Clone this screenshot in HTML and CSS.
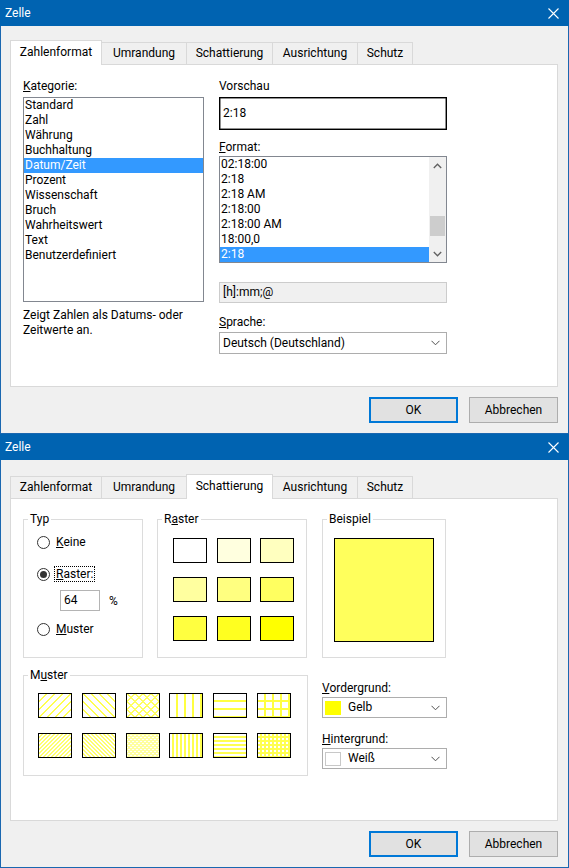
FILE: index.html
```html
<!DOCTYPE html>
<html lang="de">
<head>
<meta charset="utf-8">
<title>Zelle</title>
<link rel="stylesheet" href="styles.css">
</head>
<body>
<div class="window">
  <div class="titlebar">
    <span class="title">Zelle</span>
    <svg class="close" width="11" height="11" viewBox="0 0 11 11"><path d="M0.5,0.5 L10.5,10.5 M10.5,0.5 L0.5,10.5" stroke="#ffffff" stroke-width="1.1"/></svg>
  </div>
  <div class="client">
    <div class="tabs">
      <div class="tab active t-zahl">Zahlenformat</div>
      <div class="tab t-umr">Umrandung</div>
      <div class="tab t-sch">Schattierung</div>
      <div class="tab t-aus">Ausrichtung</div>
      <div class="tab t-schutz">Schutz</div>
    </div>
    <div class="panel p1">
      <div class="col-left">
        <div class="lbl"><u>K</u>ategorie:</div>
        <div class="listbox cat">
          <div class="item">Standard</div>
          <div class="item">Zahl</div>
          <div class="item">Währung</div>
          <div class="item">Buchhaltung</div>
          <div class="item sel">Datum/Zeit</div>
          <div class="item">Prozent</div>
          <div class="item">Wissenschaft</div>
          <div class="item">Bruch</div>
          <div class="item">Wahrheitswert</div>
          <div class="item">Text</div>
          <div class="item">Benutzerdefiniert</div>
        </div>
        <div class="desc">Zeigt Zahlen als Datums- oder<br>Zeitwerte an.</div>
      </div>
      <div class="col-right">
        <div class="lbl">Vorschau</div>
        <div class="preview">2:18</div>
        <div class="lbl fmt-lbl"><u>F</u>ormat:</div>
        <div class="listbox fmt">
          <div class="items">
            <div class="item">02:18:00</div>
            <div class="item">2:18</div>
            <div class="item">2:18 AM</div>
            <div class="item">2:18:00</div>
            <div class="item">2:18:00 AM</div>
            <div class="item">18:00,0</div>
            <div class="item sel">2:18</div>
          </div>
          <div class="vscroll">
            <div class="sb-btn"><svg width="9" height="6" viewBox="0 0 9 6"><path d="M0.8,5 L4.5,1.2 L8.2,5" fill="none" stroke="#606060" stroke-width="1.3"/></svg></div>
            <div class="sb-track"><div class="sb-thumb"></div></div>
            <div class="sb-btn"><svg width="9" height="6" viewBox="0 0 9 6"><path d="M0.8,1 L4.5,4.8 L8.2,1" fill="none" stroke="#606060" stroke-width="1.3"/></svg></div>
          </div>
        </div>
        <div class="codebox">[h]:mm;@</div>
        <div class="lbl lang-lbl"><u>S</u>prache:</div>
        <div class="combo lang">
          <span class="combo-text">Deutsch (Deutschland)</span>
          <svg class="chev" width="9" height="6" viewBox="0 0 9 6"><path d="M0.5,0.8 L4.5,4.8 L8.5,0.8" fill="none" stroke="#505050" stroke-width="1"/></svg>
        </div>
      </div>
    </div>
    <div class="buttons">
      <div class="btn default">OK</div>
      <div class="btn">Abbrechen</div>
    </div>
  </div>
</div>

<div class="window">
  <div class="titlebar">
    <span class="title">Zelle</span>
    <svg class="close" width="11" height="11" viewBox="0 0 11 11"><path d="M0.5,0.5 L10.5,10.5 M10.5,0.5 L0.5,10.5" stroke="#ffffff" stroke-width="1.1"/></svg>
  </div>
  <div class="client">
    <div class="tabs">
      <div class="tab t-zahl">Zahlenformat</div>
      <div class="tab t-umr">Umrandung</div>
      <div class="tab active t-sch">Schattierung</div>
      <div class="tab t-aus">Ausrichtung</div>
      <div class="tab t-schutz">Schutz</div>
    </div>
    <div class="panel p2">
      <div class="row-top">
        <fieldset class="group typ">
          <legend>Typ</legend>
          <div class="radio-row r1"><span class="radio"></span><span class="rlabel"><u>K</u>eine</span></div>
          <div class="radio-row r2"><span class="radio checked"></span><span class="rlabel focus"><u>R</u>aster:</span></div>
          <div class="pct-row"><span class="spin">64</span><span class="pct">%</span></div>
          <div class="radio-row r3"><span class="radio"></span><span class="rlabel"><u>M</u>uster</span></div>
        </fieldset>
        <fieldset class="group raster">
          <legend>R<u>a</u>ster</legend>
          <div class="swatches">
            <div class="sw s0"></div><div class="sw s1"></div><div class="sw s2"></div>
            <div class="sw s3"></div><div class="sw s4"></div><div class="sw s5"></div>
            <div class="sw s6"></div><div class="sw s7"></div><div class="sw s8"></div>
          </div>
        </fieldset>
        <fieldset class="group beispiel">
          <legend>Beispiel</legend>
          <div class="sample"></div>
        </fieldset>
      </div>
      <div class="row-bottom">
        <fieldset class="group muster">
          <legend>M<u>u</u>ster</legend>
          <div class="patterns">
            <div class="pat up8"></div>
            <div class="pat dn8"></div>
            <div class="pat x8"></div>
            <div class="pat v8"></div>
            <div class="pat h8"></div>
            <div class="pat g8"></div>
            <div class="pat up4"></div>
            <div class="pat dn4"></div>
            <div class="pat x4"></div>
            <div class="pat v4"></div>
            <div class="pat h4"></div>
            <div class="pat g4"></div>
          </div>
        </fieldset>
        <div class="colors">
          <div class="lbl vg-lbl"><u>V</u>ordergrund:</div>
          <div class="combo color">
            <span class="chip yellow"></span><span class="combo-text">Gelb</span>
            <svg class="chev" width="9" height="6" viewBox="0 0 9 6"><path d="M0.5,0.8 L4.5,4.8 L8.5,0.8" fill="none" stroke="#505050" stroke-width="1"/></svg>
          </div>
          <div class="lbl hg-lbl"><u>H</u>intergrund:</div>
          <div class="combo color">
            <span class="chip white"></span><span class="combo-text">Weiß</span>
            <svg class="chev" width="9" height="6" viewBox="0 0 9 6"><path d="M0.5,0.8 L4.5,4.8 L8.5,0.8" fill="none" stroke="#505050" stroke-width="1"/></svg>
          </div>
        </div>
      </div>
    </div>
    <div class="buttons">
      <div class="btn default">OK</div>
      <div class="btn">Abbrechen</div>
    </div>
  </div>
</div>
</body>
</html>
```

FILE: styles.css
```css
* { box-sizing: border-box; }
html, body { margin: 0; padding: 0; }
body {
  width: 569px;
  height: 868px;
  overflow: hidden;
  background: #f0f0f0;
  font-family: Roboto, "Noto Sans", "DejaVu Sans", sans-serif;
  font-size: 12px;
  color: #000;
}

.window {
  width: 569px;
  height: 434px;
  display: flex;
  flex-direction: column;
  background: #f0f0f0;
  border: 1px solid #1a67b0;
  border-top: 0;
}
.titlebar {
  height: 26px;
  flex: none;
  margin: 0 -1px;
  padding: 0 10px 0 5px;
  background: #0063b1;
  color: #fff;
  display: flex;
  align-items: center;
  justify-content: space-between;
}
.title { font-size: 12px; line-height: 15px; }
.close { display: block; }

.client {
  flex: 1;
  padding: 14px 10px 0 9px;
  display: flex;
  flex-direction: column;
}

/* tabs */
.tabs {
  height: 25px;
  margin-bottom: -1px;
  display: flex;
  align-items: flex-end;
}
.tab {
  height: 22px;
  margin-bottom: 1px;
  border: 1px solid #d9d9d9;
  border-bottom: 0;
  border-left-width: 0;
  background: #f0f0f0;
  line-height: 21px;
  text-align: center;
  white-space: nowrap;
}
.tab:first-child { border-left-width: 1px; }
.tab.active {
  position: relative;
  z-index: 1;
  height: 25px;
  margin-bottom: 0;
  background: #fff;
  border-left-width: 1px;
  line-height: 22px;
}
.t-zahl { width: 92px; }
.t-umr { width: 85px; }
.t-sch { width: 86px; }
.t-aus { width: 85px; }
.t-schutz { width: 55px; }
.tabs .tab.t-sch.active { margin-left: -1px; width: 87px; }

.panel {
  height: 323px;
  flex: none;
  background: #fff;
  border: 1px solid #d9d9d9;
}

.lbl { height: 15px; line-height: 15px; white-space: nowrap; }

/* page 1 */
.p1 {
  display: flex;
  padding: 14px 0 0 12px;
}
.col-left { width: 180px; }
.col-right { width: 228px; margin-left: 16px; }
.listbox {
  border: 1px solid #828790;
  background: #fff;
}
.listbox.cat {
  margin-top: 3px;
  height: 205px;
  width: 181px;
}
.item {
  height: 15px;
  line-height: 15px;
  padding-left: 1px;
  white-space: nowrap;
}
.item.sel { background: #3399ff; color: #fff; }
.desc { margin-top: 6px; line-height: 15px; }

.preview {
  margin-top: 3px;
  height: 33px;
  border: 1px solid #000;
  box-shadow: inset 0 0 0 0.5px #222;
  padding-left: 3px;
  line-height: 31px;
}
.fmt-lbl { margin-top: 10px; }
.listbox.fmt {
  margin-top: 1px;
  height: 107px;
  display: flex;
}
.items { flex: 1; }
.vscroll {
  width: 17px;
  display: flex;
  flex-direction: column;
  background: #f0f0f0;
}
.sb-btn {
  height: 17px;
  display: flex;
  align-items: center;
  justify-content: center;
}
.sb-btn svg { display: block; }
.sb-track { flex: 1; padding: 0 1px; }
.sb-thumb {
  margin-top: 42px;
  height: 20px;
  background: #cdcdcd;
}
.codebox {
  margin-top: 19px;
  height: 21px;
  border: 1px solid #cccccc;
  background: #f0f0f0;
  padding-left: 3px;
  line-height: 19px;
}
.lang-lbl { margin-top: 12px; }
.combo {
  margin-top: 2px;
  height: 22px;
  border: 1px solid #adadad;
  background: #fff;
  display: flex;
  align-items: center;
  padding: 0 6px 0 3px;
}
.combo-text { flex: 1; white-space: nowrap; line-height: 15px; }
.chev { display: block; flex: none; }

/* buttons */
.buttons {
  margin-top: 10px;
  display: flex;
  justify-content: flex-end;
  gap: 11px;
}
.btn {
  width: 89px;
  height: 26px;
  border: 1px solid #adadad;
  background: #e1e1e1;
  text-align: center;
  line-height: 24px;
}
.btn.default {
  border: 2px solid #0078d7;
  line-height: 22px;
}

/* page 2 */
.p2 { padding: 13px 0 0 12px; }
.row-top { display: flex; height: 146px; }
.row-bottom { display: flex; margin-top: 10px; }
.group {
  margin: 0;
  padding: 0;
  min-width: 0;
  border: 1px solid #dcdcdc;
}
.group legend {
  margin-left: 4px;
  padding: 0 2px;
  line-height: 15px;
  font-size: 12px;
}
.typ { width: 120px; }
.raster { width: 150px; margin-left: 14px; padding-top: 11px; }
.beispiel { width: 124px; margin-left: 15px; padding-top: 11px; }

.radio-row { display: flex; align-items: center; height: 16px; margin-left: 13px; }
.radio-row.r1 { margin-top: 7px; }
.radio-row.r2 { margin-top: 16px; }
.radio-row.r3 { margin-top: 10px; }
.radio {
  width: 13px;
  height: 13px;
  border: 1px solid #333;
  border-radius: 50%;
  background: #fff;
  flex: none;
  display: flex;
  align-items: center;
  justify-content: center;
}
.radio.checked::after {
  content: "";
  width: 7px;
  height: 7px;
  border-radius: 50%;
  background: #333;
}
.rlabel { margin-left: 5px; line-height: 14px; padding: 0 1px; }
.rlabel.focus { outline: 1px dotted #000; outline-offset: 0; }
.pct-row { display: flex; align-items: center; margin-top: 8px; margin-left: 36px; }
.spin {
  width: 40px;
  height: 21px;
  border: 1px solid #b4b4b4;
  background: #fff;
  padding-left: 3px;
  line-height: 19px;
}
.pct { margin-left: 9px; }

.swatches {
  display: grid;
  grid-template-columns: repeat(3, 34px);
  grid-auto-rows: 25px;
  column-gap: 9.5px;
  row-gap: 14px;
  margin-left: 15px;
}
.sw { border: 1px solid #000; }
.s0 { background: #ffffff; }
.s1 { background: #ffffdf; }
.s2 { background: #ffffbf; }
.s3 { background: #ffff9f; }
.s4 { background: #ffff80; }
.s5 { background: #ffff60; }
.s6 { background: #ffff40; }
.s7 { background: #ffff20; }
.s8 { background: #ffff00; }
.sample {
  margin-left: 11px;
  width: 100px;
  height: 104px;
  border: 1px solid #000;
  background: #ffff5c;
}

.muster { width: 285px; height: 108px; padding-top: 10px; }
.patterns {
  display: grid;
  grid-template-columns: repeat(6, 34px);
  grid-auto-rows: 25px;
  column-gap: 9.8px;
  row-gap: 15px;
  margin-left: 14px;
}
.pat { border: 1px solid #000; background-color: #fff; }
.up8 { background-image: repeating-linear-gradient(-45deg, #fff 0 4.4px, #ffff50 4.4px 5.657px); }
.dn8 { background-image: repeating-linear-gradient(45deg, #fff 0 4.4px, #ffff50 4.4px 5.657px); }
.x8 {
  background-image:
    repeating-linear-gradient(-45deg, transparent 0 4.66px, #ffff60 4.66px 5.657px),
    repeating-linear-gradient(45deg, #fff 0 4.66px, #ffff60 4.66px 5.657px);
}
.v8 { background-image: repeating-linear-gradient(90deg, #fff 0 6px, #ffff40 6px 8px); }
.h8 { background-image: repeating-linear-gradient(180deg, #fff 0 6px, #ffff40 6px 8px); }
.g8 {
  background-image:
    repeating-linear-gradient(90deg, rgba(255,255,255,0) 0 6px, #ffff40 6px 8px),
    repeating-linear-gradient(180deg, #fff 0 6px, #ffff40 6px 8px);
}
.up4 { background-image: repeating-linear-gradient(-45deg, #fff 0 1.9px, #ffff70 1.9px 2.83px); }
.dn4 { background-image: repeating-linear-gradient(45deg, #fff 0 1.9px, #ffff70 1.9px 2.83px); }
.x4 {
  background-image:
    repeating-linear-gradient(-45deg, rgba(255,255,255,0) 0 2.1px, #ffffa0 2.1px 2.83px),
    repeating-linear-gradient(45deg, #fff 0 2.1px, #ffffa0 2.1px 2.83px);
}
.v4 { background-image: repeating-linear-gradient(90deg, #fff 0 2px, #ffff50 2px 4px); }
.h4 { background-image: repeating-linear-gradient(180deg, #fff 0 2px, #ffff50 2px 4px); }
.g4 {
  background-image:
    repeating-linear-gradient(90deg, rgba(255,255,255,0) 0 2px, #ffff50 2px 4px),
    repeating-linear-gradient(180deg, #fff 0 2px, #ffff50 2px 4px);
}

.colors { width: 125px; margin-left: 14px; }
.vg-lbl { margin-top: 13px; }
.hg-lbl { margin-top: 14px; }
.combo.color { margin-top: 1px; height: 21px; padding-left: 2px; }
.chip { width: 16px; height: 14px; flex: none; margin-right: 7px; }
.chip.yellow { background: #ffff00; }
.chip.white { background: #fff; border: 1px solid #c8c8c8; }
```
